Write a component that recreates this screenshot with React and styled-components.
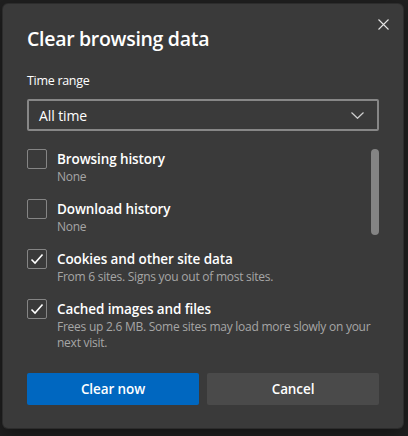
import styled, { createGlobalStyle } from "styled-components";

const Global = createGlobalStyle`
  html, body {
    margin: 0;
    background: #202020;
    font-family: "Open Sans", "Noto Sans", sans-serif;
    color: #fff;
  }
`

const Page = styled.div`
  width: 408px;
  height: 436px;
  padding: 4px 0 0 3px;
  box-sizing: border-box;
  overflow: hidden;
`

const Dialog = styled.div`
  position: relative;
  width: 400px;
  height: 424px;
  box-sizing: border-box;
  padding: 21px 24px 23px;
  background: #3a3a3a;
  border-radius: 5px;
  box-shadow: 0 0 0 1px #2c2c2c, 0 6px 20px rgba(0, 0, 0, 0.45);
  display: flex;
  flex-direction: column;
`

const Close = styled.button`
  position: absolute;
  top: 12px;
  right: 12px;
  width: 16px;
  height: 16px;
  padding: 0;
  border: 0;
  background: none;
  display: flex;
  align-items: center;
  justify-content: center;
  color: #e4e4e4;
`

const Title = styled.h1`
  margin: 0;
  font-size: 19.5px;
  line-height: 28px;
  font-weight: 600;
  letter-spacing: -0.3px;
`

const Label = styled.div`
  margin-top: 18px;
  font-size: 12.5px;
  line-height: 20px;
  letter-spacing: -0.3px;
`

const Select = styled.div`
  margin-top: 8px;
  height: 32px;
  box-sizing: border-box;
  border: 2px solid #878787;
  border-radius: 2px;
  padding: 0 13px 0 10px;
  display: flex;
  align-items: center;
  justify-content: space-between;
  font-size: 14px;
  letter-spacing: -0.1px;
`

const List = styled.div`
  position: relative;
  margin-top: 10px;
  height: 216px;
  padding-top: 8px;
  box-sizing: border-box;
  overflow: hidden;
  display: flex;
  flex-direction: column;
  gap: 14px;
`

const Thumb = styled.div`
  position: absolute;
  top: 8px;
  right: 0;
  width: 8px;
  height: 86px;
  border-radius: 4px;
  background: #848484;
`

const Item = styled.label`
  display: flex;
  gap: 10px;
  padding-right: 4px;
`

const Box = styled.span`
  flex: none;
  width: 20px;
  height: 20px;
  box-sizing: border-box;
  border: 1px solid #858585;
  border-radius: 2px;
  display: flex;
  align-items: center;
  justify-content: center;
`

const Texts = styled.div`
  display: flex;
  flex-direction: column;
`

const Name = styled.span`
  font-size: 13.5px;
  line-height: 20px;
  font-weight: 600;
  letter-spacing: -0.1px;
`

const Desc = styled.span`
  font-size: 12px;
  line-height: 16px;
  letter-spacing: -0.25px;
  color: #a6a6a6;
`

const Footer = styled.div`
  margin-top: 16px;
  display: grid;
  grid-template-columns: 1fr 1fr;
  gap: 8px;
`

const Button = styled.button`
  height: 32px;
  border: 0;
  border-radius: 2px;
  font-family: inherit;
  font-size: 13.5px;
  font-weight: 600;
  letter-spacing: -0.1px;
  color: #fff;
  background: ${(p) => (p.$primary ? "#0067c0" : "#4a4a4a")};
`

const items = [
  { name: "Browsing history", desc: "None", checked: false },
  { name: "Download history", desc: "None", checked: false },
  { name: "Cookies and other site data", desc: "From 6 sites. Signs you out of most sites.", checked: true },
  { name: "Cached images and files", desc: "Frees up 2.6 MB. Some sites may load more slowly on your next visit.", checked: true },
];

function Check() {
  return (
    <svg width="14" height="12" viewBox="0 0 14 12">
      <path d="M1.5 6.5 L5 10 L12.5 1.5" fill="none" stroke="#fff" strokeWidth="1.6" />
    </svg>
  );
}

export default function App() {
  return (
    <Page>
      <Global />
      <Dialog>
        <Close aria-label="Close">
          <svg width="11" height="11" viewBox="0 0 11 11">
            <path d="M0.5 0.5 L10.5 10.5 M10.5 0.5 L0.5 10.5" stroke="currentColor" strokeWidth="1.1" />
          </svg>
        </Close>
        <Title>Clear browsing data</Title>
        <Label>Time range</Label>
        <Select>
          <span>All time</span>
          <svg width="13" height="7" viewBox="0 0 13 7">
            <path d="M0.5 0.5 L6.5 6.3 L12.5 0.5" fill="none" stroke="#cfcfcf" strokeWidth="1.2" />
          </svg>
        </Select>
        <List>
          {items.map((it) => (
            <Item key={it.name}>
              <Box>{it.checked && <Check />}</Box>
              <Texts>
                <Name>{it.name}</Name>
                <Desc>{it.desc}</Desc>
              </Texts>
            </Item>
          ))}
          <Thumb />
        </List>
        <Footer>
          <Button $primary>Clear now</Button>
          <Button>Cancel</Button>
        </Footer>
      </Dialog>
    </Page>
  );
}
